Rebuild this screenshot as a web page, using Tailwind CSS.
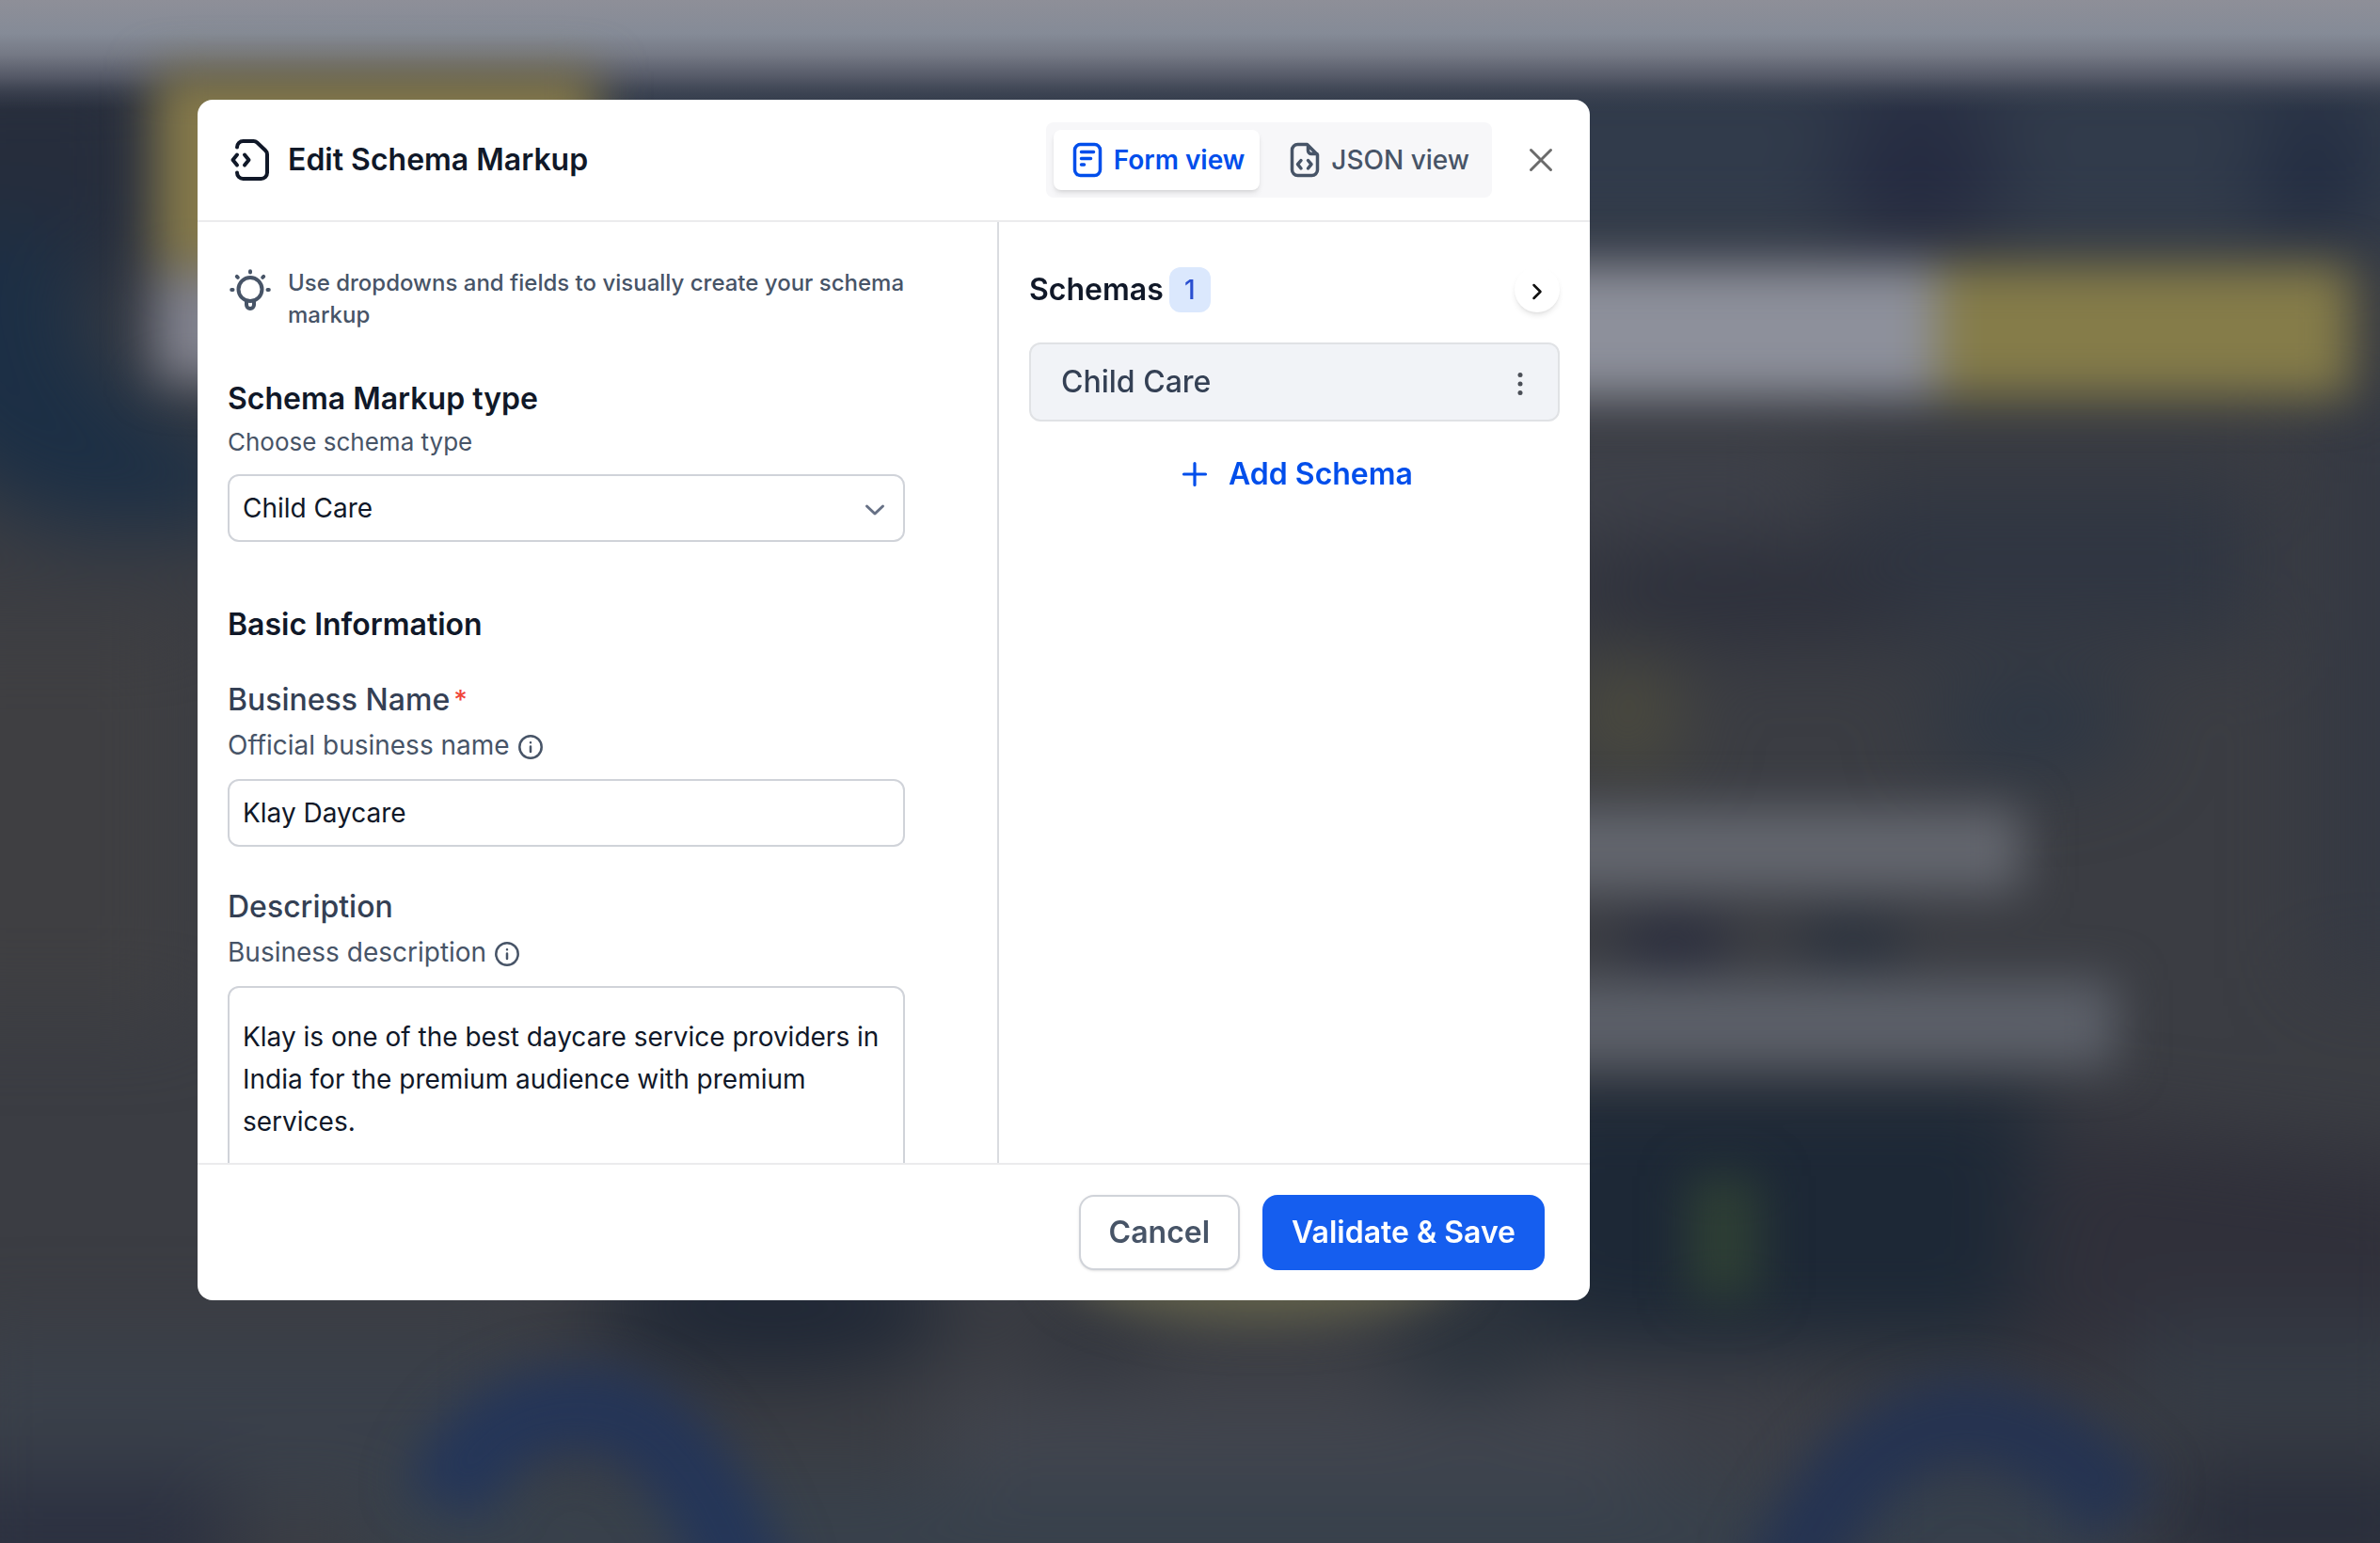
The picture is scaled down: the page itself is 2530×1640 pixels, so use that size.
<!DOCTYPE html>
<html lang="en">
<head>
<meta charset="utf-8">
<meta name="viewport" content="width=device-width, initial-scale=1">
<title>Edit Schema Markup</title>
<script src="https://cdn.jsdelivr.net/npm/@tailwindcss/browser@4"></script>
</head>
<body class="relative min-h-screen overflow-x-hidden bg-[#3b3d43] font-['Inter',sans-serif] text-[#101828]">

<!-- Dimmed, blurred page behind the dialog -->
<svg class="absolute inset-0 h-full w-full" viewBox="0 0 2530 1640" preserveAspectRatio="none" aria-hidden="true">
  <defs>
    <filter id="soft" x="-50%" y="-50%" width="200%" height="200%" color-interpolation-filters="sRGB"><feGaussianBlur stdDeviation="44"/></filter>
    <filter id="mid" x="-50%" y="-50%" width="200%" height="200%" color-interpolation-filters="sRGB"><feGaussianBlur stdDeviation="25"/></filter>
    <linearGradient id="top" x1="0" y1="0" x2="0" y2="1">
      <stop offset="0" stop-color="#8e8f98"/><stop offset=".3" stop-color="#858b97"/><stop offset=".5" stop-color="#747884"/><stop offset=".7" stop-color="#585c6a" stop-opacity=".9"/><stop offset=".85" stop-color="#444a59" stop-opacity=".5"/><stop offset="1" stop-color="#394050" stop-opacity="0"/>
    </linearGradient>
  </defs>
  <rect width="2530" height="1640" fill="#3b3d43"/>
  <g filter="url(#soft)">
    <rect x="-100" y="60" width="270" height="240" fill="#262d3c"/>
    <path d="M-100 240H80Q60 420 260 480V560H80Q-20 540-100 440Z" fill="#1c2f45"/>
    <rect x="-100" y="660" width="300" height="420" fill="#3f3f42"/>
    <rect x="600" y="40" width="2000" height="230" fill="#313b4b"/>
    <ellipse cx="2040" cy="180" rx="90" ry="90" fill="#252b41"/>
    <ellipse cx="2460" cy="180" rx="50" ry="80" fill="#202a40"/>
    <rect x="1960" y="510" width="440" height="170" fill="#303642"/>
    <ellipse cx="1840" cy="630" rx="200" ry="50" fill="#2c2f3b"/>
    <rect x="1600" y="480" width="330" height="70" fill="#3f424c"/>
    <ellipse cx="1730" cy="760" rx="50" ry="60" fill="#504e3c"/>
    <ellipse cx="2160" cy="770" rx="110" ry="50" fill="#2c3644"/>
    <rect x="2460" y="400" width="140" height="640" fill="#353943"/>
    <path d="M1600 1150H2170L2140 1430H1680L1600 1370Z" fill="#1d2836"/>
    <path d="M2180 1190L2600 1240V1460H2140Z" fill="#30303a"/>
    <rect x="2260" y="1400" width="340" height="120" fill="#353b45"/>
    <rect x="-60" y="1420" width="620" height="190" fill="#3a404a"/>
    <rect x="-60" y="1570" width="300" height="130" fill="#2b3040"/>
    <ellipse cx="820" cy="1390" rx="190" ry="70" fill="#1f2735"/>
    <ellipse cx="1160" cy="1420" rx="60" ry="36" fill="#2e323b"/>
    <ellipse cx="1560" cy="1430" rx="80" ry="50" fill="#27303a"/>
    <rect x="1000" y="1480" width="760" height="90" fill="#43464f"/>
    <rect x="400" y="1570" width="1500" height="130" fill="#38414c"/>
    <rect x="1740" y="1480" width="200" height="60" fill="#3f414a"/>
    <rect x="1950" y="1560" width="300" height="120" fill="#36404d"/>
    <rect x="2300" y="1560" width="300" height="120" fill="#282d3b"/>
  </g>
  <rect width="2530" height="118" fill="url(#top)"/>
  <g filter="url(#mid)">
    <rect x="165" y="76" width="470" height="210" fill="#85794a"/>
    <rect x="165" y="290" width="120" height="115" fill="#82838f"/>
    <rect x="1500" y="282" width="565" height="140" fill="#8d909b"/>
    <rect x="2060" y="282" width="440" height="140" fill="#857c49"/>
    <rect x="1600" y="858" width="550" height="90" fill="#63666e"/>
    <rect x="1600" y="1042" width="650" height="92" fill="#5c6069"/>
    <ellipse cx="1780" cy="1000" rx="60" ry="26" fill="#2b2e3e"/>
    <ellipse cx="1970" cy="1000" rx="60" ry="24" fill="#2b323e"/>
    <rect x="1795" y="1250" width="75" height="130" fill="#2e3f34"/>
    <ellipse cx="1340" cy="1342" rx="210" ry="62" fill="#62614a"/>
    <path d="M475 1600Q510 1497 620 1497T800 1700" fill="none" stroke="#1f335c" stroke-width="92" opacity=".8"/>
    <path d="M1890 1700Q1970 1510 2095 1510Q2190 1520 2260 1610" fill="none" stroke="#1f3056" stroke-width="92" opacity=".75"/>
  </g>
</svg>

<div class="relative px-4 pt-[106px] pb-12 lg:pl-[210px]">
  <div role="dialog" aria-modal="true" aria-labelledby="dialog-title" class="w-full max-w-[1480px] overflow-hidden rounded-2xl bg-white">

    <header class="flex items-center justify-between border-b-2 border-[#ebebed] px-8 py-6">
      <div class="flex items-center gap-4">
        <svg class="size-12" viewBox="0 0 48 48" fill="none" stroke="currentColor" stroke-width="4" stroke-linecap="round" stroke-linejoin="round" aria-hidden="true">
          <path d="M10 10.500A6.500 6.500 0 0 1 16.500 4H27.500c1.500 0 2.700.5 3.800 1.500l8.700 8.200c1.200 1.100 2 2.600 2 4.300v19.500a6.500 6.500 0 0 1-6.500 6.500h-19A6.500 6.500 0 0 1 10 37.500"/>
          <path d="M10 18.500L5.500 24L10 29.500M18 18.500L22.500 24L18 29.500"/>
        </svg>
        <h1 id="dialog-title" class="text-[32px] leading-12 font-semibold">Edit Schema Markup</h1>
      </div>
      <div class="flex items-center gap-8">
        <div class="flex gap-3 rounded-lg bg-[#f7f7f9] p-2">
          <button type="button" aria-pressed="true" class="flex h-16 items-center gap-2 rounded-lg bg-white px-4 text-[28px] font-semibold text-[#004eeb] shadow-md">
            <svg class="size-10" viewBox="0 0 40 40" fill="none" stroke="currentColor" stroke-width="3.500" stroke-linecap="round" stroke-linejoin="round" aria-hidden="true">
              <rect x="6.500" y="3.500" width="27" height="33" rx="6"/>
              <path d="M13.500 11.500H26.500M13.500 18.500H23.500M13.500 25H16.500"/>
            </svg>
            Form view
          </button>
          <button type="button" aria-pressed="false" class="flex h-16 items-center gap-2 rounded-lg px-4 text-[28px] font-medium text-[#475467]">
            <svg class="size-10" viewBox="0 0 40 40" fill="none" stroke="currentColor" stroke-width="3.500" stroke-linecap="round" stroke-linejoin="round" aria-hidden="true">
              <path d="M22.500 3.500H12.500a6 6 0 0 0-6 6v21a6 6 0 0 0 6 6h15a6 6 0 0 0 6-6V14.500ZM23.500 4.500V10a3.500 3.500 0 0 0 3.500 3.500H33"/>
              <path d="M16 20.500L12.500 24.700L16 29M23.500 20.500L27 24.700L23.500 29"/>
            </svg>
            JSON view
          </button>
        </div>
        <button type="button" aria-label="Close" class="text-[#6b6b6b]">
          <svg class="size-10" viewBox="0 0 40 40" fill="none" stroke="currentColor" stroke-width="3" stroke-linecap="round" aria-hidden="true"><path d="M9.500 9.500L30.500 30.500M30.500 9.500L9.500 30.500"/></svg>
        </button>
      </div>
    </header>

    <div class="flex max-h-[1000px]">
      <form class="min-w-0 flex-1 overflow-y-auto pt-12 pr-[98px] pl-8 [scrollbar-width:none]">
        <div class="flex gap-4">
          <svg class="size-12 shrink-0 text-[#475467]" viewBox="0 0 48 48" fill="none" stroke="currentColor" stroke-width="4" stroke-linecap="round" stroke-linejoin="round" aria-hidden="true">
            <circle cx="24" cy="23.500" r="12.500"/>
            <path d="M20 36v4a4 4 0 0 0 8 0v-4M24 4.200v1.300M4.200 24h1.300M42.500 24h1.300M9.800 9.800l1 1M38.200 9.800l-1 1"/>
          </svg>
          <p class="text-2xl leading-[34px] font-medium text-[#475467]">Use dropdowns and fields to visually create your schema markup</p>
        </div>

        <h2 class="mt-12 text-[32px] leading-12 font-semibold">Schema Markup type</h2>
        <label for="schema-type" class="block text-[26px] leading-11 text-[#475467]">Choose schema type</label>
        <div class="relative mt-3">
          <select id="schema-type" class="h-[72px] w-full appearance-none rounded-xl border-2 border-[#d0d3d9] bg-white px-3.5 text-[28px]">
            <option selected>Child Care</option>
          </select>
          <svg class="pointer-events-none absolute top-6 right-5 size-6 text-[#667085]" viewBox="0 0 24 24" fill="none" stroke="currentColor" stroke-width="3" stroke-linecap="round" stroke-linejoin="round" aria-hidden="true"><path d="M3.500 10L12 18L20.500 10"/></svg>
        </div>

        <h2 class="mt-16 text-[32px] leading-12 font-semibold">Basic Information</h2>

        <label for="business-name" class="mt-8 flex gap-1 text-[32px] leading-12 font-medium text-[#344054]">Business Name<span class="text-[28px] text-[#f04438]">*</span></label>
        <p class="flex items-center gap-2 text-[28px] leading-12 text-[#475467]">Official business name
          <svg class="mt-1 size-7" viewBox="0 0 28 28" fill="none" stroke="currentColor" stroke-width="2.500" stroke-linecap="round" aria-hidden="true"><circle cx="14" cy="14" r="11.700"/><path d="M14 13.500V19M14 9.200V9.300"/></svg>
        </p>
        <input id="business-name" type="text" value="Klay Daycare" class="mt-3 h-[72px] w-full rounded-xl border-2 border-[#d0d3d9] px-3.5 text-[28px]">

        <label for="description" class="mt-10 block text-[32px] leading-12 font-medium text-[#344054]">Description</label>
        <p class="flex items-center gap-2 text-[28px] leading-12 text-[#475467]">Business description
          <svg class="mt-1 size-7" viewBox="0 0 28 28" fill="none" stroke="currentColor" stroke-width="2.500" stroke-linecap="round" aria-hidden="true"><circle cx="14" cy="14" r="11.700"/><path d="M14 13.500V19M14 9.200V9.300"/></svg>
        </p>
        <textarea id="description" rows="4" class="mt-3 block w-full resize-none rounded-xl border-2 border-[#d0d3d9] px-3.5 py-[30px] text-[28px] leading-[45px]">Klay is one of the best daycare service providers in India for the premium audience with premium services.</textarea>
      </form>

      <aside class="w-[630px] shrink-0 border-l-2 border-[#dadce0] px-8 pt-12">
        <div class="flex items-center gap-1.5">
          <h2 class="text-[32px] leading-12 font-semibold">Schemas</h2>
          <span class="flex h-12 w-11 items-center justify-center rounded-xl bg-[#dbe8fd] text-[28px] font-medium text-[#2a4fd0]">1</span>
          <button type="button" aria-label="Collapse schemas" class="ml-auto flex size-12 items-center justify-center rounded-full bg-white text-[#101010] shadow-md">
            <svg class="mt-1 size-6" viewBox="0 0 24 24" fill="none" stroke="currentColor" stroke-width="2.500" stroke-linecap="round" stroke-linejoin="round" aria-hidden="true"><path d="M8.500 5L15.500 12L8.500 19"/></svg>
          </button>
        </div>
        <div class="mt-8 flex h-[84px] items-center justify-between rounded-xl border-2 border-[#e0e2e5] bg-[#f1f3f7] px-8">
          <span class="text-[32px] font-medium text-[#344054]">Child Care</span>
          <button type="button" aria-label="Schema options" class="text-[#4b4f57]">
            <svg class="mt-1 h-8 w-4" viewBox="0 0 16 32" fill="currentColor" aria-hidden="true"><circle cx="8" cy="6.500" r="2.500"/><circle cx="8" cy="16" r="2.500"/><circle cx="8" cy="25.500" r="2.500"/></svg>
          </button>
        </div>
        <button type="button" class="mt-8 flex w-full items-center justify-center gap-4 text-[32px] leading-12 font-semibold text-[#004eeb]">
          <svg class="size-10" viewBox="0 0 40 40" fill="none" stroke="currentColor" stroke-width="3.200" stroke-linecap="round" aria-hidden="true"><path d="M20 8.500V31.500M8.500 20H31.500"/></svg>
          Add Schema
        </button>
      </aside>
    </div>

    <footer class="flex justify-end gap-6 border-t-2 border-[#ebebed] px-12 py-8">
      <button type="button" class="h-20 rounded-2xl border-2 border-[#d0d3d9] bg-white px-[30px] text-[32px] font-semibold text-[#475467] shadow-sm">Cancel</button>
      <button type="submit" class="h-20 rounded-2xl bg-[#155eef] px-[31px] text-[32px] font-semibold text-white">Validate &amp; Save</button>
    </footer>
  </div>
</div>
</body>
</html>
